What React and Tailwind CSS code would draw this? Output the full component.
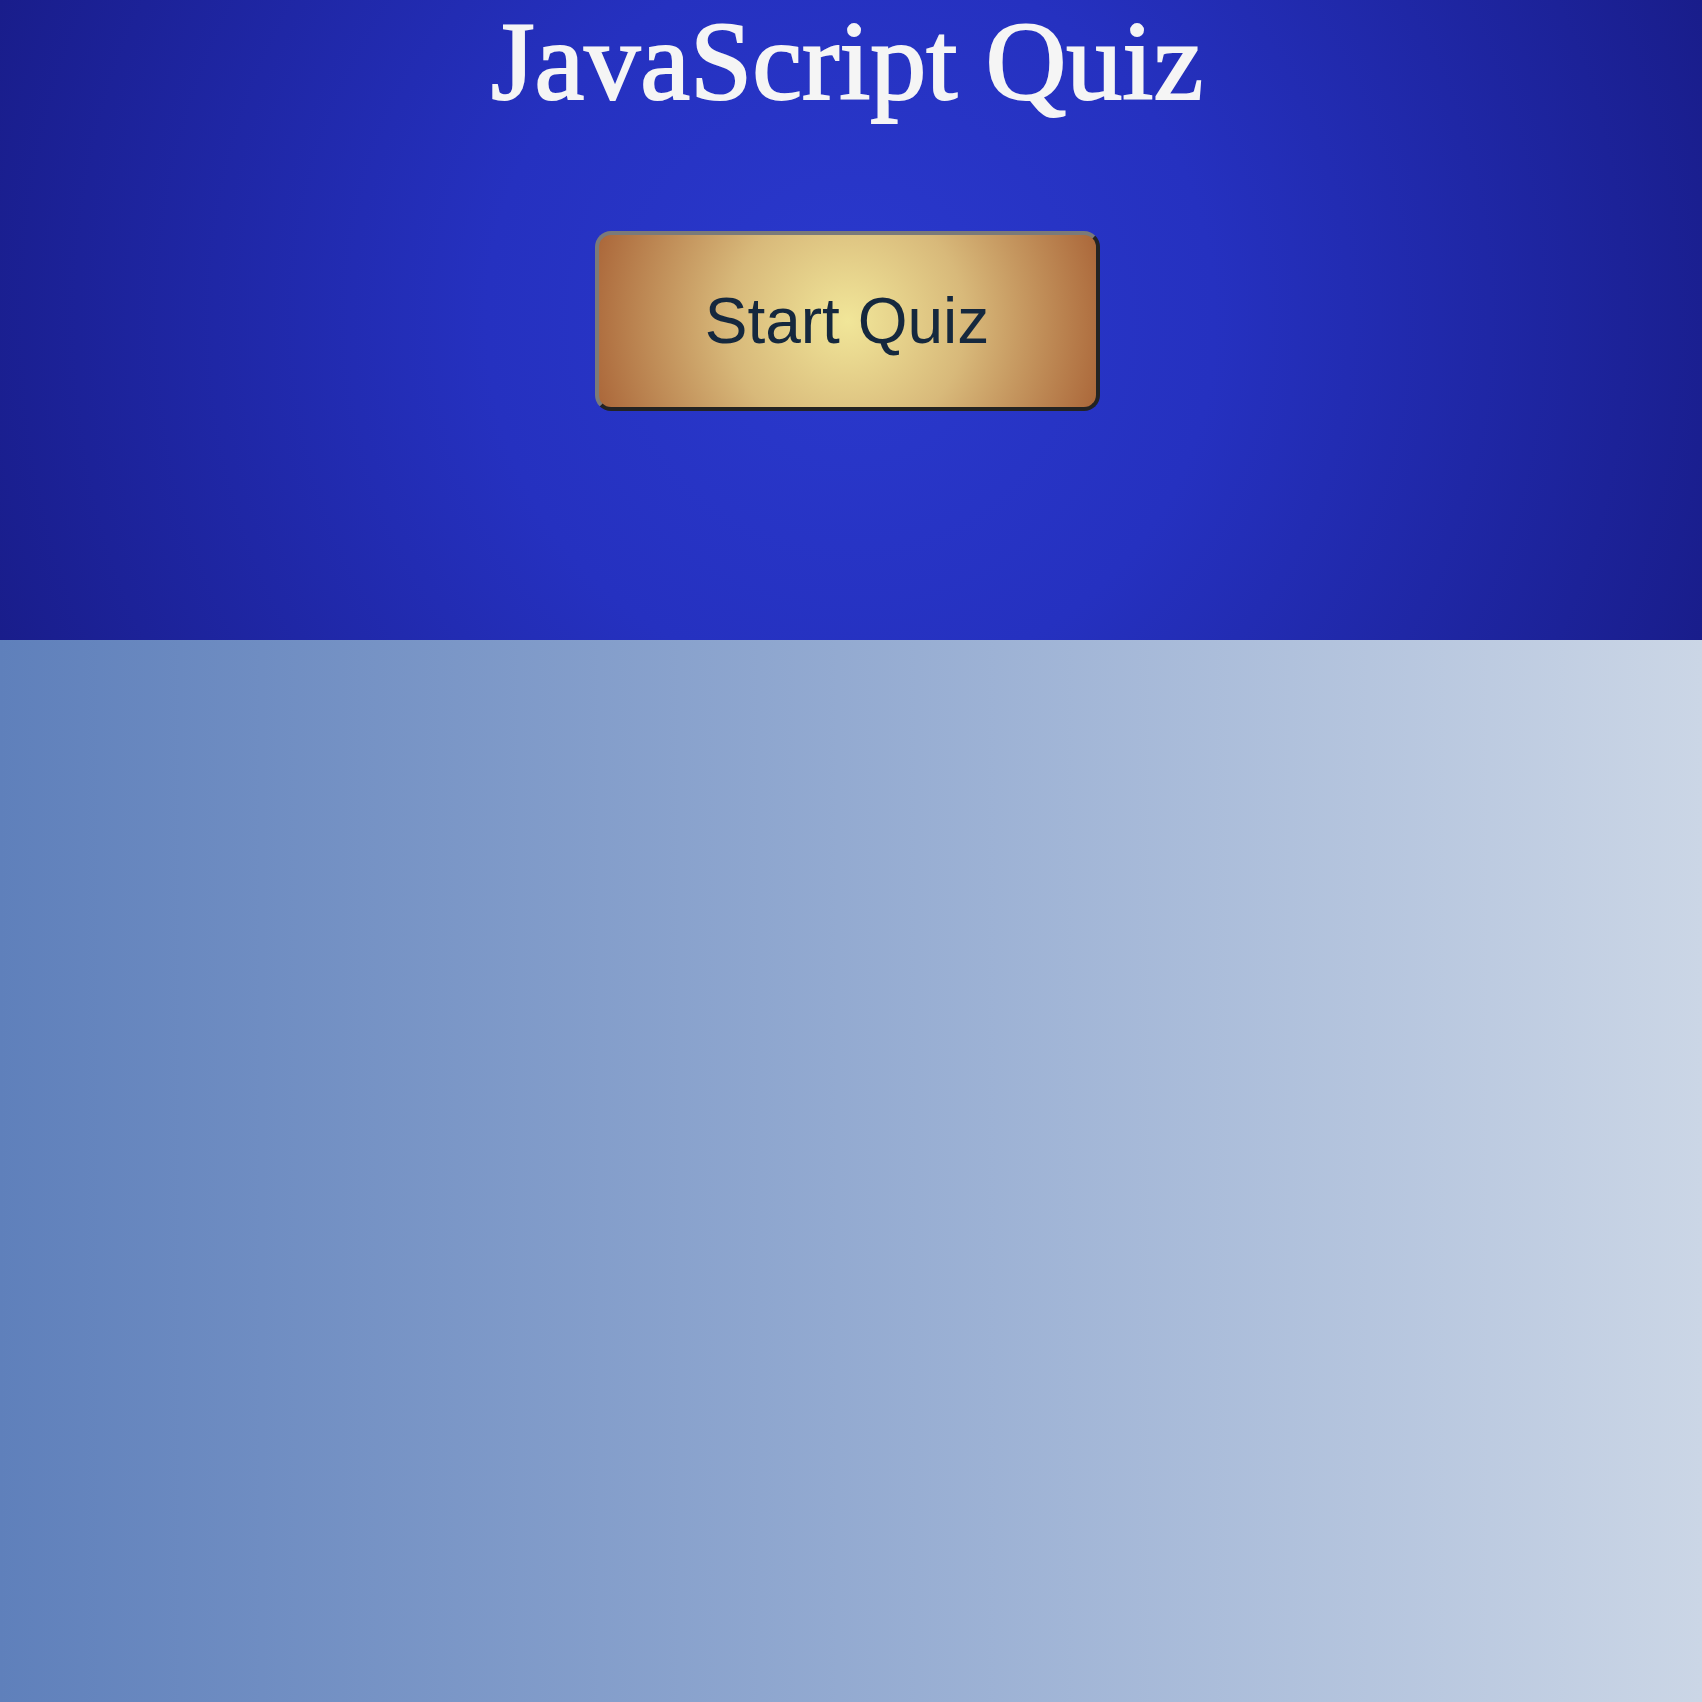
import React from 'react';

const App = () => {
  return (
    <div className="w-full min-h-screen flex flex-col">
      <header className="h-[640px] pr-2 flex flex-col items-center bg-[radial-gradient(circle_at_center,#2a39cd_0%,#2531c0_40%,#191d8b_100%)]">
        <h1 className="mt-[5px] text-[112px] leading-none text-[#f5f5f5] font-['Liberation_Serif',serif] [-webkit-text-stroke:2px_#f5f5f5]">
          JavaScript Quiz
        </h1>
        <button className="mt-[114px] w-[505px] h-[180px] flex items-center justify-center rounded-[16px] border-4 border-t-[#7a7a7a] border-l-[#7a7a7a] border-b-[#232323] border-r-[#232323] bg-[radial-gradient(circle_at_center,#f1e699_0%,#d8b97a_45%,#ab673a_100%)] text-[64px] text-[#15283e] font-['Liberation_Sans',Arial,sans-serif]">
          Start Quiz
        </button>
      </header>
      <main className="h-[1062px] bg-gradient-to-r from-[#5f80bb] to-[#cbd6e6]" />
    </div>
  );
};

export default App;
